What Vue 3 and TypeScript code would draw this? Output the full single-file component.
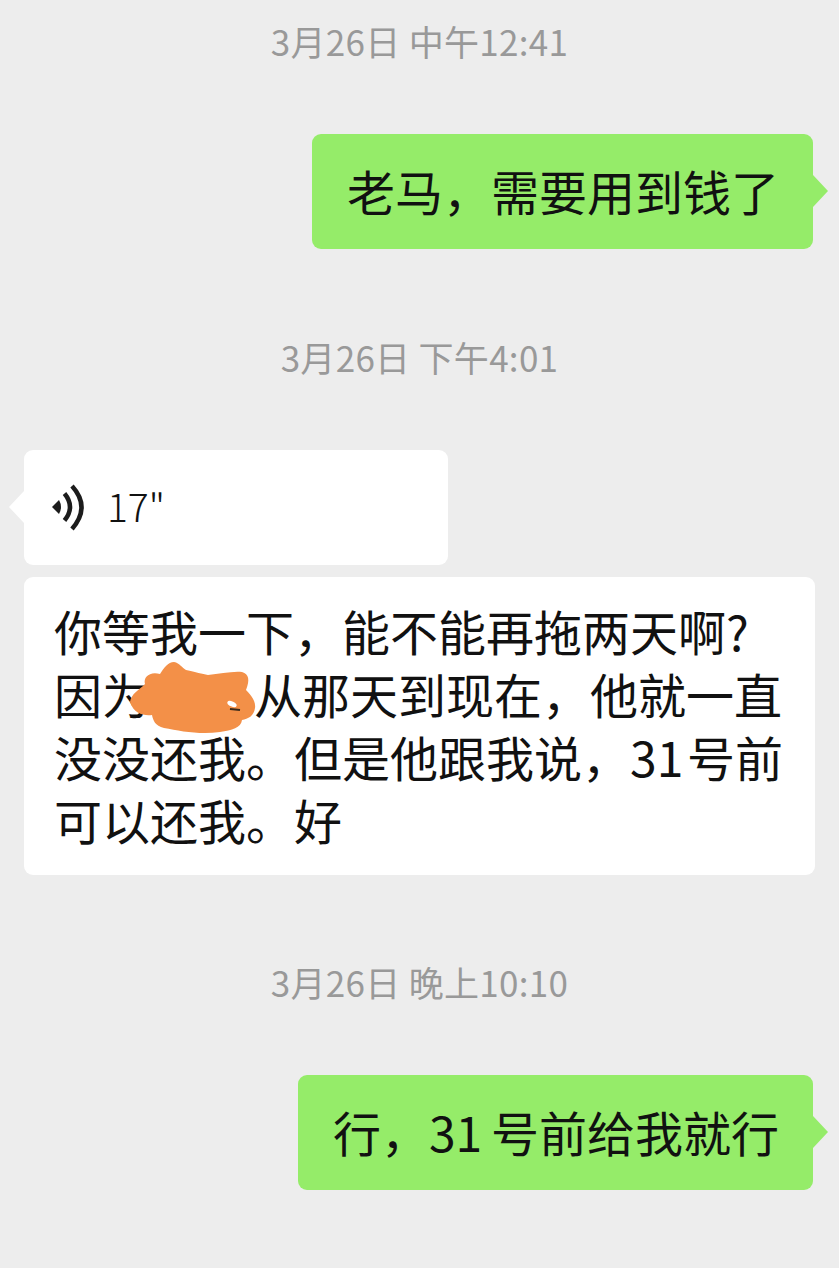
<script setup lang="ts">
const firstLine = '你等我一下，能不能再拖两天啊?'
</script>

<template>
  <main class="chat">
    <p class="time first">3月26日 中午12:41</p>
    <div class="row right">
      <div class="bubble green one">老马，需要用到钱了</div>
    </div>
    <p class="time second">3月26日 下午4:01</p>
    <div class="row left voice-row">
      <div class="bubble white voice">
        <svg class="wave" width="34" height="48" viewBox="0 0 34 48" aria-hidden="true">
          <path d="M0 23 L7 16 Q11 23 7 30 Z" fill="#1c1c1c" />
          <path d="M12.500 9.500 Q23.500 23 12.500 36.500" fill="none" stroke="#1c1c1c" stroke-width="4.500" />
          <path d="M20 2 Q39 23 20 45" fill="none" stroke="#1c1c1c" stroke-width="4.500" />
        </svg>
        <span class="secs">17"</span>
      </div>
    </div>
    <div class="row left text-row">
      <div class="bubble white para">
        <div class="line">{{ firstLine }}</div>
        <div class="line">因为<span class="hidden-name"><svg class="blob" width="126" height="73" viewBox="0 0 126 73" aria-hidden="true">
          <path d="M0 40 C1 32 9 28 15 22 C13 15 20 9 30 12 C34 6 38 0 44 0 C50 1 52 6 56 8 C66 10 72 12 78 13 C90 12 102 9 112 10 C119 12 120 18 116 28 C122 34 126 40 125 46 C124 54 118 57 112 58 C111 66 102 68 90 70 C70 73 50 69 34 66 C25 64 23 58 22 53 C14 54 4 52 0 40 Z" fill="#f39048" />
          <ellipse cx="102" cy="42" rx="5" ry="2.500" fill="#ffffff" transform="rotate(25 102 42)" />
          <path d="M100 47 L110 48" stroke="#3a2a1c" stroke-width="2" />
        </svg></span>从那天到现在，他就一直</div>
        <div class="line tight">没没还我。但是他跟我说，31 号前</div>
        <div class="line">可以还我。好</div>
      </div>
    </div>
    <p class="time third">3月26日 晚上10:10</p>
    <div class="row right">
      <div class="bubble green two">行，31 号前给我就行</div>
    </div>
  </main>
</template>

<style>
html, body { margin: 0; background: #ededed; }
</style>

<style scoped>
.chat {
  width: 839px;
  height: 1268px;
  overflow: hidden;
  background: #ededed;
  font-family: "Noto Sans CJK SC", "Noto Sans", sans-serif;
  color: #111;
}
.time {
  margin: 0;
  height: 50px;
  line-height: 50px;
  text-align: center;
  font-size: 35px;
  letter-spacing: 0.3px;
  color: #999;
  white-space: pre;
}
.first { padding-top: 16px; margin-bottom: 68px; }
.second { margin-top: 83px; margin-bottom: 68px; }
.third { margin-top: 82px; margin-bottom: 68px; }
.row { display: flex; }
.right { justify-content: flex-end; padding-right: 26px; }
.left { padding-left: 24px; }
.text-row { margin-top: 12px; }
.bubble {
  position: relative;
  box-sizing: border-box;
  border-radius: 9px;
  font-size: 48px;
  white-space: nowrap;
}
.green {
  height: 115px;
  line-height: 112px;
  padding: 0 34px 0 35px;
  background: #95ec69;
}
.two { word-spacing: -2px; }
.green::after {
  content: "";
  position: absolute;
  right: -15px;
  top: 41px;
  width: 15px;
  height: 32px;
  background: inherit;
  clip-path: polygon(0 0, 100% 50%, 0 100%);
}
.white { background: #fff; }
.voice {
  display: flex;
  align-items: center;
  width: 424px;
  height: 115px;
  padding-left: 28px;
}
.voice::before {
  content: "";
  position: absolute;
  left: -15px;
  top: 41px;
  width: 15px;
  height: 32px;
  background: inherit;
  clip-path: polygon(100% 0, 0 50%, 100% 100%);
}
.wave { flex: none; }
.secs { margin-left: 21px; margin-bottom: 4px; font-size: 39px; font-weight: 300; line-height: 1; }
.para {
  width: 791px;
  height: 298px;
  padding: 22px 0 0 30px;
}
.line { height: 63px; line-height: 63px; }
.tight { word-spacing: -7px; }
.hidden-name {
  position: relative;
  display: inline-block;
  width: 104px;
  height: 48px;
}
.blob {
  position: absolute;
  left: -20px;
  top: -4px;
}
</style>
